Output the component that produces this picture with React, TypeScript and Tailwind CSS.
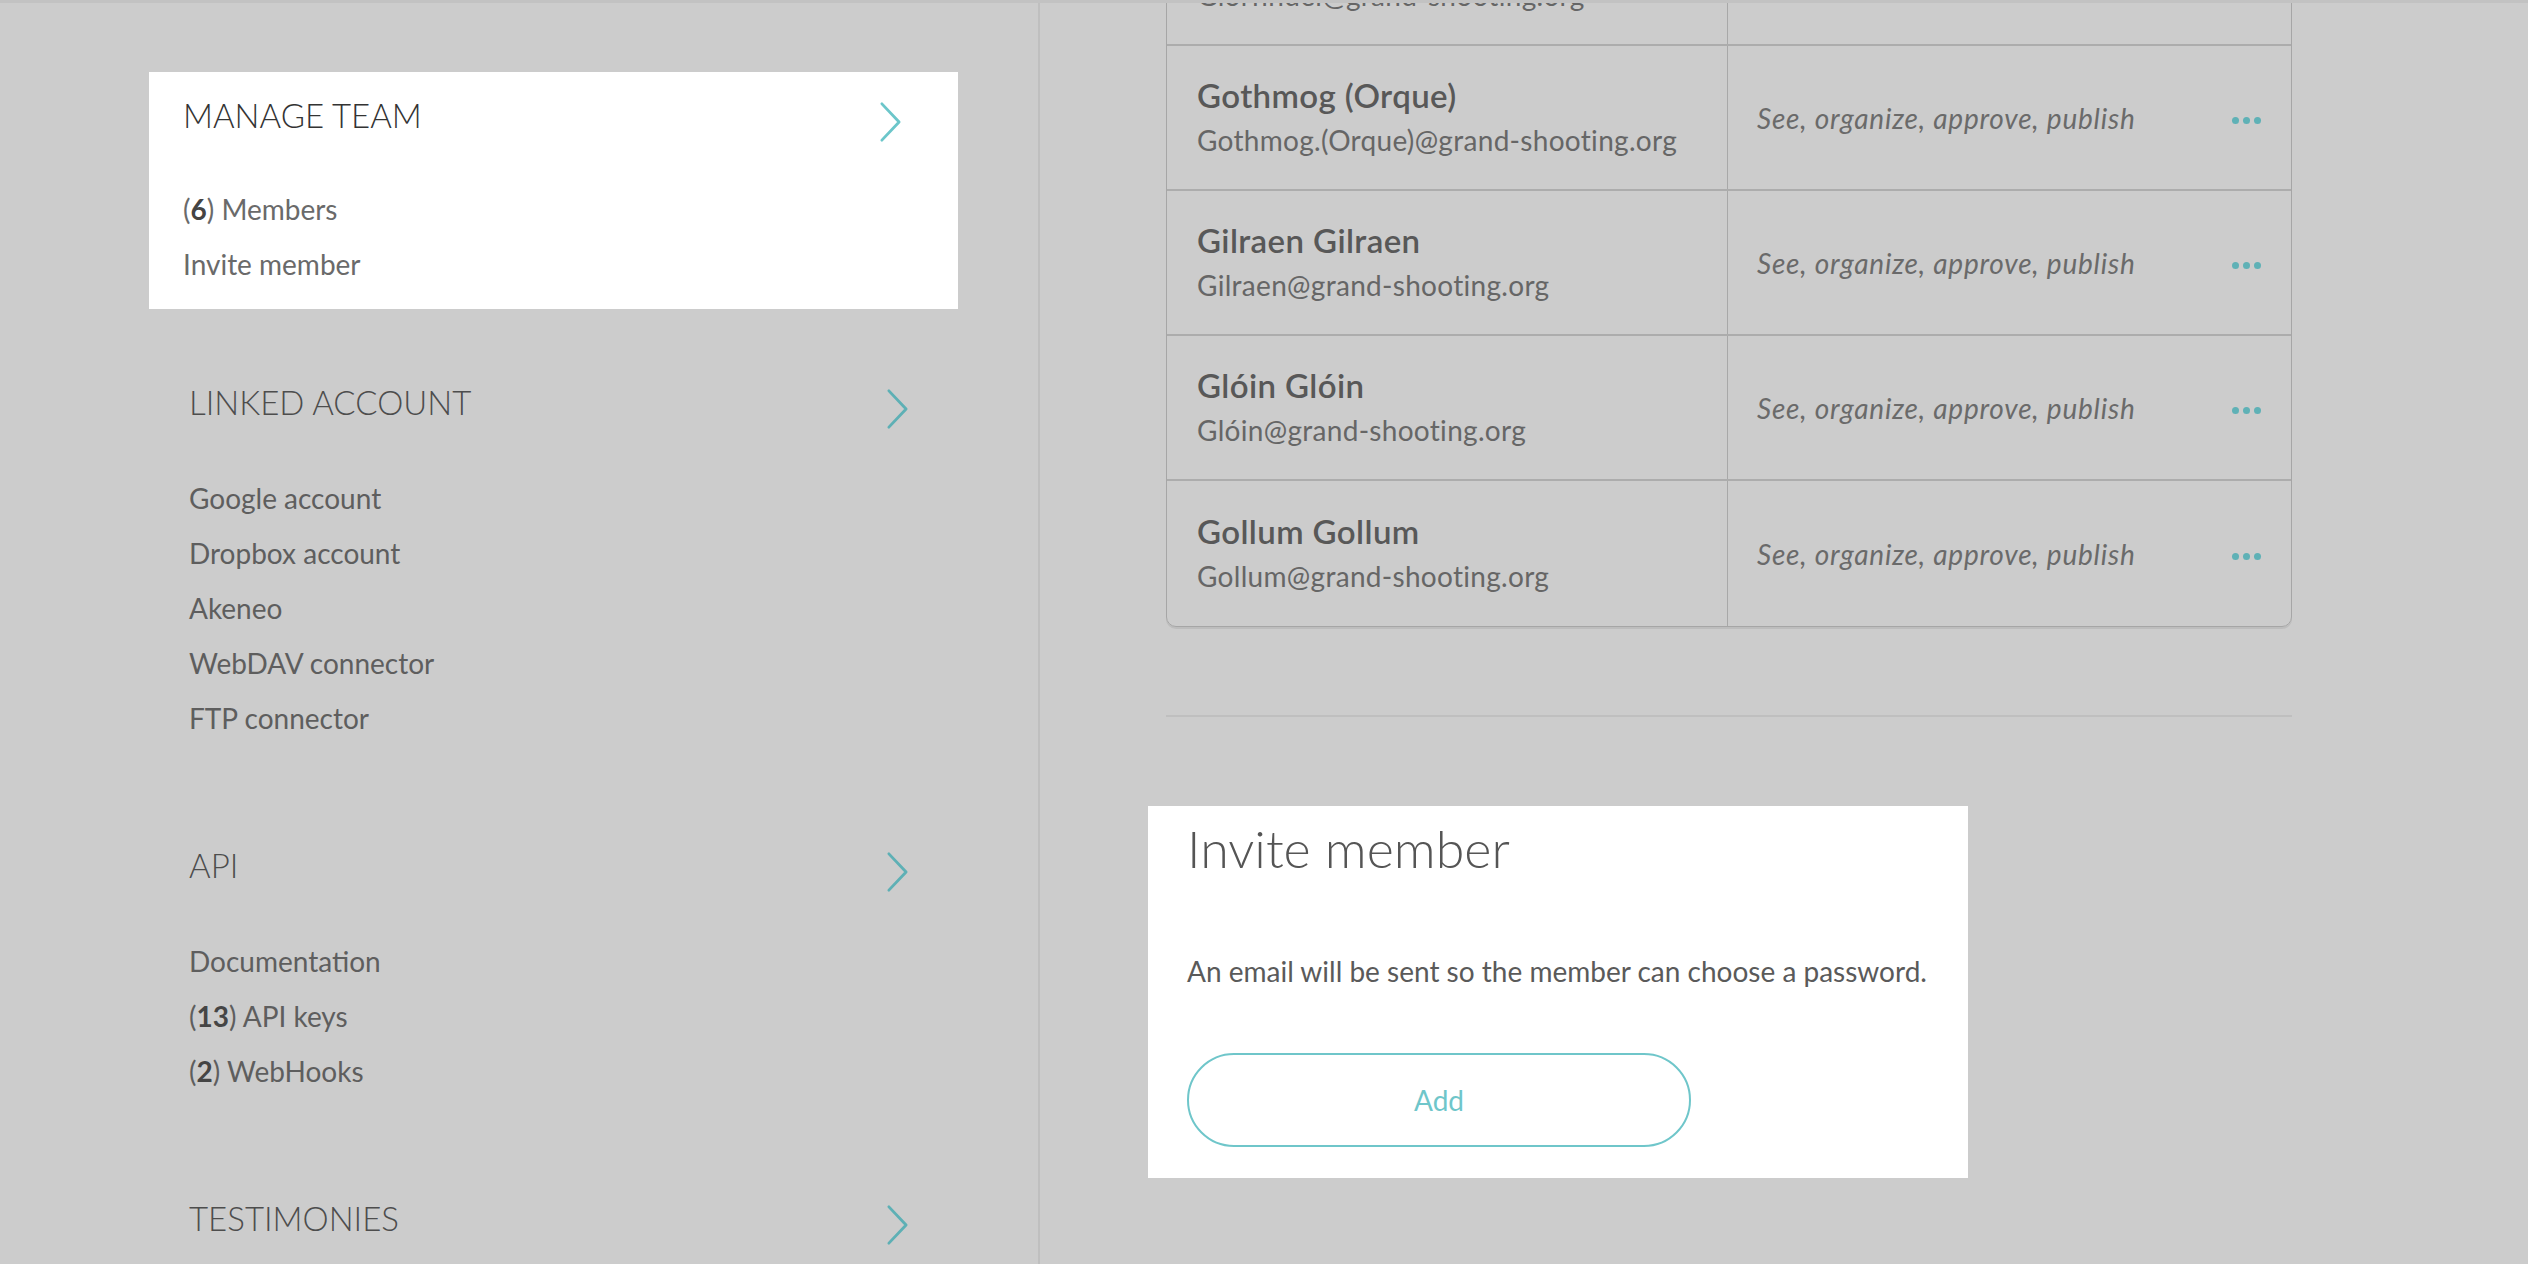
import React from "react";

type Item = { label: string; count?: number };

const sections: { title: string; items: Item[] }[] = [
  {
    title: "LINKED ACCOUNT",
    items: [
      { label: "Google account" },
      { label: "Dropbox account" },
      { label: "Akeneo" },
      { label: "WebDAV connector" },
      { label: "FTP connector" },
    ],
  },
  {
    title: "API",
    items: [
      { label: "Documentation" },
      { label: "API keys", count: 13 },
      { label: "WebHooks", count: 2 },
    ],
  },
  { title: "TESTIMONIES", items: [] },
];

const members = [
  { name: "Glorfindel Glorfindel", email: "Glorfindel@grand-shooting.org" },
  { name: "Gothmog (Orque)", email: "Gothmog.(Orque)@grand-shooting.org" },
  { name: "Gilraen Gilraen", email: "Gilraen@grand-shooting.org" },
  { name: "Glóin Glóin", email: "Glóin@grand-shooting.org" },
  { name: "Gollum Gollum", email: "Gollum@grand-shooting.org" },
];

function Chevron({ color }: { color: string }) {
  return (
    <svg viewBox="0 0 24 44" className="mt-[12px] h-[42px] w-[23px]" fill="none">
      <path d="M3 3 L21 22 L3 41" stroke={color} strokeWidth="3" strokeLinecap="round" strokeLinejoin="round" />
    </svg>
  );
}

function ItemLabel({ item, boldColor }: { item: Item; boldColor: string }) {
  if (item.count === undefined) return <>{item.label}</>;
  return (
    <>
      (<span className={`font-bold ${boldColor}`}>{item.count}</span>) {item.label}
    </>
  );
}

function Section({ title, items }: { title: string; items: Item[] }) {
  return (
    <div className="mb-[97px] w-[909px] pl-[189px]">
      <div className="flex h-[48px] items-center justify-between">
        <h2 className="text-[33px] font-light text-[#4d4d4d]">{title}</h2>
        <Chevron color="#5eb0b5" />
      </div>
      {items.length > 0 && (
        <ul className="mt-[43px]">
          {items.map((it) => (
            <li key={it.label} className="flex h-[55px] items-center text-[28px] text-[#5e5e5e]">
              <ItemLabel item={it} boldColor="text-[#454545]" />
            </li>
          ))}
        </ul>
      )}
    </div>
  );
}

function ManageTeamCard() {
  return (
    <div className="ml-[149px] w-[809px] bg-white pb-[18px] pl-[34px] pr-[56px] pt-[20px]">
      <div className="flex h-[48px] items-center justify-between">
        <h2 className="text-[33px] font-light text-[#333333]">MANAGE TEAM</h2>
        <Chevron color="#6cc6ca" />
      </div>
      <ul className="mt-[41px]">
        <li className="flex h-[55px] items-center text-[28px] text-[#6a6a6a]">
          <ItemLabel item={{ label: "Members", count: 6 }} boldColor="text-[#444444]" />
        </li>
        <li className="flex h-[55px] items-center text-[28px] text-[#6a6a6a]">Invite member</li>
      </ul>
    </div>
  );
}

function MemberRow({ name, email, last }: { name: string; email: string; last: boolean }) {
  return (
    <div className={`flex h-[145px] ${last ? "" : "border-b-2 border-[#acacac]"}`}>
      <div className="flex w-[561px] flex-col justify-center border-r border-[#a8a8a8] pl-[30px]">
        <div className="text-[33px] font-semibold leading-[40px] tracking-[0.4px] text-[#585858]">{name}</div>
        <div className="mt-[5px] text-[28px] leading-[40px] tracking-[0.3px] text-[#666666]">{email}</div>
      </div>
      <div className="flex flex-1 items-center justify-between pl-[29px] pr-[30px]">
        <span className="text-[28px] italic tracking-[0.8px] text-[#6a6a6a]">See, organize, approve, publish</span>
        <span className="mt-[6px] flex gap-[4px]">
          <span className="h-[7px] w-[7px] rounded-full bg-[#5fb1b6]" />
          <span className="h-[7px] w-[7px] rounded-full bg-[#5fb1b6]" />
          <span className="h-[7px] w-[7px] rounded-full bg-[#5fb1b6]" />
        </span>
      </div>
    </div>
  );
}

export default function App() {
  return (
    <div className="flex h-[1264px] w-full flex-col overflow-hidden bg-[#cccccc] font-['Lato','Open_Sans',sans-serif]">
      <div className="h-[3px] w-full shrink-0 bg-[#c2c2c2]" />
      <div className="flex flex-1 overflow-hidden">
        <aside className="w-[1040px] shrink-0 border-r-2 border-[#bfbfbf] pt-[69px]">
          <ManageTeamCard />
          <div className="mt-[70px]">
            {sections.map((s) => (
              <Section key={s.title} title={s.title} items={s.items} />
            ))}
          </div>
        </aside>

        <main className="flex-1 pl-[126px]">
          <div className="mt-[-103px] w-[1126px] overflow-hidden rounded-b-[10px] border border-[#a6a6a6] shadow-[0_2px_0_#bdbdbd]">
            {members.map((m, i) => (
              <MemberRow key={m.email} name={m.name} email={m.email} last={i === members.length - 1} />
            ))}
          </div>

          <div className="mt-[88px] h-[2px] w-[1126px] bg-[#bfbfbf]" />

          <section className="ml-[-18px] mt-[89px] w-[820px] bg-white pb-[31px] pl-[39px] pt-[12px]">
            <h1 className="text-[52px] font-light leading-[60px] text-[#555555]">Invite member</h1>
            <p className="mt-[73px] text-[28px] leading-[40px] text-[#5a5a5a]">
              An email will be sent so the member can choose a password.
            </p>
            <button className="mt-[62px] h-[94px] w-[504px] rounded-full border-2 border-[#6fc6ca] text-[28px] text-[#6fc6ca]">
              Add
            </button>
          </section>
        </main>
      </div>
    </div>
  );
}
